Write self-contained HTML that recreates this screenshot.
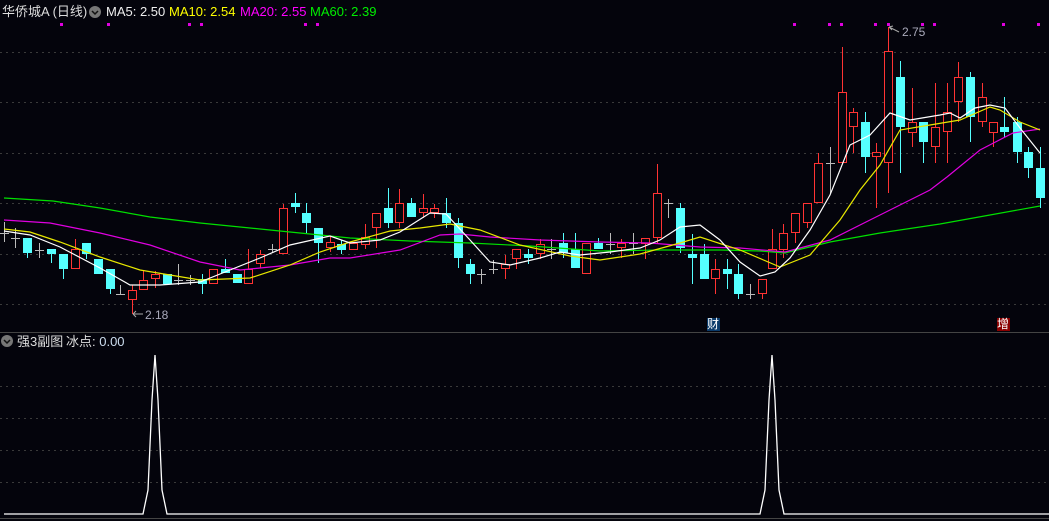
<!DOCTYPE html>
<html><head><meta charset="utf-8">
<style>
html,body{margin:0;padding:0;background:#04040c;}
#w{position:relative;width:1049px;height:521px;overflow:hidden;background:#04040c;font-family:"Liberation Sans","Noto Sans CJK SC",sans-serif;}
.t{position:absolute;font-size:13px;white-space:nowrap;line-height:15px;}
svg{position:absolute;left:0;top:0;}
</style></head><body><div id="w">
<svg id="s" width="1049" height="521" viewBox="0 0 1049 521">
<g stroke="#3a3a3a" stroke-width="1" stroke-dasharray="2,4">
<line x1="0" y1="52.5" x2="1049" y2="52.5"/><line x1="0" y1="102.5" x2="1049" y2="102.5"/>
<line x1="0" y1="153.5" x2="1049" y2="153.5"/><line x1="0" y1="203.5" x2="1049" y2="203.5"/>
<line x1="0" y1="254.5" x2="1049" y2="254.5"/><line x1="0" y1="304.5" x2="1049" y2="304.5"/>
<line x1="0" y1="386.5" x2="1049" y2="386.5"/><line x1="0" y1="418.5" x2="1049" y2="418.5"/>
<line x1="0" y1="450.5" x2="1049" y2="450.5"/><line x1="0" y1="482.5" x2="1049" y2="482.5"/>
</g>
<line x1="0" y1="332.5" x2="1049" y2="332.5" stroke="#444" stroke-width="1"/>
<line x1="0" y1="518.5" x2="1049" y2="518.5" stroke="#444" stroke-width="1"/>
<g id="c"></g>
<g fill="none" stroke-width="1.2">
<polyline stroke="#00e000" points="4,198 53,201 100,208 150,217 200,223 270,230 350,238 410,241 470,243 530,246 600,251 660,250 720,250 760,251 785,253 830,242 880,233 940,224 990,215 1040,206"/>
<polyline stroke="#e000e0" points="4,220 50,223 100,233 150,245 200,262 240,270 290,265 330,258 350,258 400,250 440,235 460,234 490,237 540,240 600,242 650,243 700,247 740,248 785,252 830,240 870,220 900,205 930,190 947,177 980,150 1013,133 1040,129"/>
<polyline stroke="#e8e800" points="4,229 30,232 60,242 100,257 140,270 200,280 250,278 290,265 320,252 350,242 390,231 420,228 450,224 480,230 520,245 570,256 600,260 640,254 680,243 700,237 740,250 780,267 810,255 840,220 860,190 880,165 900,130 930,125 960,120 990,107 1000,110 1020,122 1040,130"/>
<polyline stroke="#ffffff" points="4,231 30,235 60,247 100,268 130,285 160,285 200,282 230,270 260,258 290,245 330,236 350,243 380,240 400,232 430,213 446,214 470,240 490,262 510,265 540,258 560,252 580,255 610,252 640,248 660,240 680,227 700,225 720,240 740,262 760,276 775,272 790,258 810,230 830,195 850,145 870,135 890,113 910,120 940,115 950,113 960,118 975,108 990,105 1005,108 1020,128 1040,153"/>
</g>
<g fill="#e000e0">
<rect x="60" y="23" width="3" height="3"/><rect x="107" y="23" width="3" height="3"/><rect x="188" y="23" width="3" height="3"/><rect x="200" y="23" width="3" height="3"/><rect x="304" y="23" width="3" height="3"/><rect x="316" y="23" width="3" height="3"/>
<rect x="793" y="23" width="3" height="3"/><rect x="828" y="23" width="3" height="3"/><rect x="840" y="23" width="3" height="3"/><rect x="874" y="23" width="3" height="3"/><rect x="887" y="23" width="3" height="3"/><rect x="921" y="23" width="3" height="3"/><rect x="933" y="23" width="3" height="3"/><rect x="1002" y="23" width="3" height="3"/><rect x="1037" y="23" width="3" height="3"/>
</g>
<g stroke="#aaa" fill="none" stroke-width="1">
<path d="M889,27 l10,5 M889,27 l3,3 M889,27 l4,-1"/>
<path d="M133,314 l10,0 M133,314 l3,-3 M133,314 l3,3"/>
</g>
<g fill="none" stroke="#fff" stroke-width="1.3">
<polyline points="4,514 143,514 148,490 152,400 155,355 158,400 162,490 167,514 760,514 765,490 769,400 772,355 775,400 779,490 784,514 1049,514"/>
</g>
<rect x="707" y="318" width="13" height="13" fill="#0a3a6a"/>
<rect x="997" y="318" width="13" height="13" fill="#8a0000"/>
<circle cx="95" cy="12" r="6" fill="#777"/><path d="M92,11 l3,3 l3,-3" stroke="#111" stroke-width="1.5" fill="none"/>
<circle cx="7" cy="341" r="6" fill="#777"/><path d="M4,340 l3,3 l3,-3" stroke="#111" stroke-width="1.5" fill="none"/>
</svg>
<div class="t" style="left:2px;top:4px;color:#ddd">华侨城A (日线)</div>
<div class="t" style="left:106px;top:4px;color:#eee">MA5: 2.50</div>
<div class="t" style="left:169px;top:4px;color:#ffff00">MA10: 2.54</div>
<div class="t" style="left:240px;top:4px;color:#ff00ff">MA20: 2.55</div>
<div class="t" style="left:310px;top:4px;color:#00ee00">MA60: 2.39</div>
<div class="t" style="left:902px;top:25px;color:#aab;font-size:12px">2.75</div>
<div class="t" style="left:145px;top:308px;color:#aab;font-size:12px">2.18</div>
<div class="t" style="left:707px;top:317px;color:#fff;font-size:12px">财</div>
<div class="t" style="left:997px;top:317px;color:#fff;font-size:12px">增</div>
<div class="t" style="left:17px;top:334px;color:#ddd">强3副图</div>
<div class="t" style="left:66px;top:334px;color:#ddd">冰点: <span style="color:#cde">0.00</span></div>
</div>
<script>
var d=[
[4,233,233,222,242,'g'],[15,238,238,228,248,'g'],[27,238,253,238,258,'c'],[39,250,250,243,258,'g'],[51,249,254,249,263,'c'],[63,254,269,254,279,'c'],[75,249,269,239,269,'r'],[86,243,254,243,259,'c'],[98,259,274,259,274,'c'],[110,269,289,269,294,'c'],[120,294,294,285,294,'g'],[132,290,300,285,314,'r'],[143,280,290,271,290,'r'],[155,274,279,271,288,'r'],[167,274,284,274,284,'c'],[178,280,280,264,285,'g'],[190,280,280,275,285,'g'],[202,279,284,274,294,'c'],[213,269,284,269,284,'r'],[225,269,273,259,273,'c'],[237,274,283,274,283,'c'],[248,269,284,249,284,'r'],[260,254,264,250,268,'r'],[272,249,249,244,253,'g'],[283,208,254,204,254,'r'],[295,203,207,193,213,'c'],[306,213,223,203,233,'c'],[318,228,243,228,263,'c'],[330,242,248,236,252,'r'],[341,244,250,240,254,'c'],
[353,243,250,243,250,'r'],[365,237,245,224,249,'r'],[376,213,228,213,248,'r'],[388,208,223,188,228,'c'],[399,203,223,189,228,'r'],[411,203,217,198,217,'c'],[423,208,213,194,218,'r'],[434,208,213,204,218,'r'],[446,213,223,198,228,'c'],[458,223,258,218,268,'c'],[470,264,274,259,284,'c'],[481,274,274,269,284,'g'],[493,269,269,260,274,'g'],[505,264,269,255,279,'r'],[516,249,259,249,269,'r'],[528,254,258,249,264,'c'],[540,244,254,239,259,'r'],[551,249,249,239,259,'g'],[563,243,253,233,258,'c'],[575,249,268,233,268,'c'],[586,243,274,243,274,'r'],[598,243,249,238,249,'c'],[610,244,244,233,254,'g'],[621,243,248,239,258,'r'],[633,243,243,233,254,'g'],[645,238,244,238,259,'r'],[657,193,238,164,244,'r'],[668,203,203,199,218,'g'],[680,208,248,203,253,'c'],[692,254,258,234,284,'c'],[704,254,279,244,279,'c'],[715,269,279,259,294,'r'],[727,269,274,259,289,'c'],[738,274,294,264,299,'c'],[750,294,294,284,299,'g'],[762,279,294,279,299,'r'],[772,249,269,229,269,'r'],
[783,233,250,224,258,'r'],[795,213,233,213,243,'r'],[807,203,223,203,228,'r'],[818,163,203,153,203,'r'],[830,163,163,147,193,'g'],[842,92,163,47,163,'r'],[853,112,127,108,153,'r'],[865,122,157,112,173,'c'],[876,152,157,143,208,'r'],[888,51,163,27,193,'r'],[900,77,127,61,173,'c'],[912,122,133,88,147,'r'],[923,122,142,122,163,'c'],[935,127,147,83,163,'r'],[947,112,132,83,163,'r'],[958,77,102,62,122,'r'],[970,77,117,72,142,'c'],[982,97,122,83,127,'r'],[993,122,133,122,147,'r'],[1004,127,132,97,137,'c'],[1017,122,152,117,163,'c'],[1028,152,168,147,178,'c'],[1040,168,198,147,208,'c']];
var h='';d.forEach(function(k){var x=k[0],o=k[1],c=k[2],hi=k[3],lo=k[4],t=k[5];
if(t=='g'){h+='<line x1="'+(x+.5)+'" y1="'+hi+'" x2="'+(x+.5)+'" y2="'+lo+'" stroke="#bbb"/><line x1="'+(x-4)+'" y1="'+(o+.5)+'" x2="'+(x+5)+'" y2="'+(o+.5)+'" stroke="#bbb"/>';}
else if(t=='c'){h+='<line x1="'+(x+.5)+'" y1="'+hi+'" x2="'+(x+.5)+'" y2="'+lo+'" stroke="#55ffff"/><rect x="'+(x-4)+'" y="'+o+'" width="9" height="'+Math.max(1,c-o)+'" fill="#55ffff"/>';}
else{h+='<line x1="'+(x+.5)+'" y1="'+hi+'" x2="'+(x+.5)+'" y2="'+o+'" stroke="#ff3333"/><line x1="'+(x+.5)+'" y1="'+c+'" x2="'+(x+.5)+'" y2="'+lo+'" stroke="#ff3333"/><rect x="'+(x-3.5)+'" y="'+(o+.5)+'" width="8" height="'+Math.max(1,c-o-1)+'" fill="#04040c" stroke="#ff3333"/>';}
});document.getElementById('c').innerHTML=h;
</script>
</body></html>
